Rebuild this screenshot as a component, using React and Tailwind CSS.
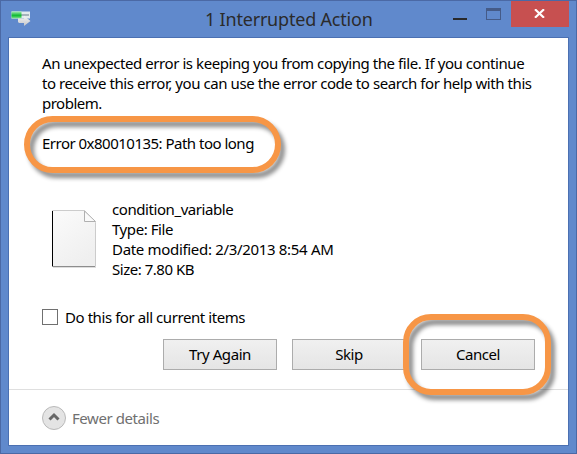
function CopyIcon() {
  return (
    <svg width="20" height="16" viewBox="0 0 20 16" className="block">
      <defs>
        <linearGradient id="greenBar" x1="0" y1="0" x2="0" y2="1">
          <stop offset="0" stopColor="#a5efb0" />
          <stop offset="0.4" stopColor="#35c455" />
          <stop offset="0.6" stopColor="#10bd30" />
          <stop offset="1" stopColor="#8be29d" />
        </linearGradient>
        <linearGradient id="arrow" x1="0" y1="0" x2="0" y2="1">
          <stop offset="0" stopColor="#f4f4f4" />
          <stop offset="1" stopColor="#c4c6c9" />
        </linearGradient>
      </defs>
      <rect x="0.5" y="0.5" width="18.5" height="7" fill="#e2eaee" />
      <rect x="10" y="3" width="8" height="2" fill="#a5b2bb" />
      <rect x="0.5" y="0.5" width="10" height="7" fill="url(#greenBar)" />
      <path d="M7 7.5h6V4.8l6.5 5.2-6.5 5v-3H8l-1-1z" fill="url(#arrow)" />
    </svg>
  );
}

function FileIcon() {
  return (
    <svg width="46" height="58" viewBox="0 0 46 58" className="block">
      <defs>
        <linearGradient id="paper" x1="0" y1="0" x2="0.6" y2="1">
          <stop offset="0" stopColor="#fbfbfb" />
          <stop offset="1" stopColor="#efefef" />
        </linearGradient>
      </defs>
      <path d="M.5.5h32l11 12v44H.5z" fill="url(#paper)" stroke="#cccccc" />
      <path d="M.5 1v55" stroke="#000" />
      <path d="M0 56.5h43" stroke="#8d8d8d" />
      <path d="M1 57.5h43" stroke="#dedede" />
      <path d="M32.5 1v10.5h11z" fill="#fafafa" stroke="#b0b0b0" />
    </svg>
  );
}

function Button({ children }) {
  return (
    <button className="h-[31px] w-[114px] border border-[#acacac] bg-linear-to-b from-[#f0f0f0] to-[#e5e5e5] pb-px text-center">
      {children}
    </button>
  );
}

function TitleBar() {
  return (
    <header className="flex h-9 items-start">
      <div className="w-[100px] pt-2.5 pl-2.5">
        <CopyIcon />
      </div>
      <h1 className="min-w-0 flex-1 pt-[5px] pl-[104px] text-[18px] leading-[27px] tracking-[-0.2px] whitespace-nowrap text-[#2b2b2b]">
        1 Interrupted Action
      </h1>
      <div className="mt-[17px] h-0.5 w-3.5 bg-[#29292b]" />
      <div className="mt-[7px] ml-[19px] h-3 w-[15px] border border-t-[3px] border-[#455b88]" />
      <div className="mr-[7px] ml-2.5 flex h-[26px] w-[58px] justify-center bg-[#c75050] pt-2">
        <svg width="11" height="9" viewBox="0 0 11 9" className="mr-px block">
          <path d="M1 .3 10 8.7M10 .3 1 8.7" stroke="#fff" strokeWidth="2.2" />
        </svg>
      </div>
    </header>
  );
}

export default function App() {
  return (
    <div className="relative h-[454px] w-[577px] border border-[#4b69a5] bg-[#6089cc] font-['Noto_Sans','Liberation_Sans',sans-serif] text-[15px] leading-5 text-black">
      <TitleBar />
      <main className="ml-[7px] flex h-[409px] w-[561px] flex-col border border-[#4b70b2] bg-white whitespace-nowrap">
        <section className="h-[352px] border-b border-[#dfdfdf] pt-[15px] pl-[33px] tracking-[-0.43px]">
          <p>An unexpected error is keeping you from copying the file. If you continue</p>
          <p>to receive this error, you can use the error code to search for help with this</p>
          <p className="tracking-[-0.5px]">problem.</p>
          <p className="mt-5 tracking-[-0.51px]">Error 0x80010135: Path too long</p>
          <div className="mt-[46px] flex gap-3.5">
            <div className="w-14 pt-[11px] pl-2.5">
              <FileIcon />
            </div>
            <div>
              <p>condition_variable</p>
              <p>Type: File</p>
              <p className="tracking-[-0.32px]">Date modified: 2/3/2013 8:54 AM</p>
              <p className="tracking-[-0.48px]">Size: 7.80 KB</p>
            </div>
          </div>
          <label className="mt-7 flex items-center gap-[7px]">
            <span className="size-4 border border-[#707070] bg-white" />
            Do this for all current items
          </label>
          <div className="mt-3 ml-[121px] flex gap-[15px]">
            <Button>Try Again</Button>
            <Button>Skip</Button>
            <Button>Cancel</Button>
          </div>
        </section>
        <footer className="flex gap-1.5 pt-[15px] pl-[33px] text-[#707070]">
          <svg width="24" height="24" viewBox="0 0 24 24" className="mt-px block">
            <circle cx="12" cy="12" r="11.5" fill="#e4e4e4" stroke="#b9b9b9" />
            <path d="m7.5 13.5 4.5-4.5 4.5 4.5" fill="none" stroke="#666" strokeWidth="3" />
          </svg>
          <span className="pt-[3px] tracking-[-0.43px]">Fewer details</span>
        </footer>
      </main>
      <div className="absolute top-[115px] left-[23px] h-[57px] w-[257px] rounded-[29px] border-[6px] border-[#f79646] drop-shadow-[4px_5px_2px_rgba(0,0,0,0.45)]" />
      <div className="absolute top-[313px] left-[402px] h-[81px] w-[148px] rounded-[28px] border-[6px] border-[#f79646] drop-shadow-[4px_5px_2px_rgba(0,0,0,0.45)]" />
    </div>
  );
}
